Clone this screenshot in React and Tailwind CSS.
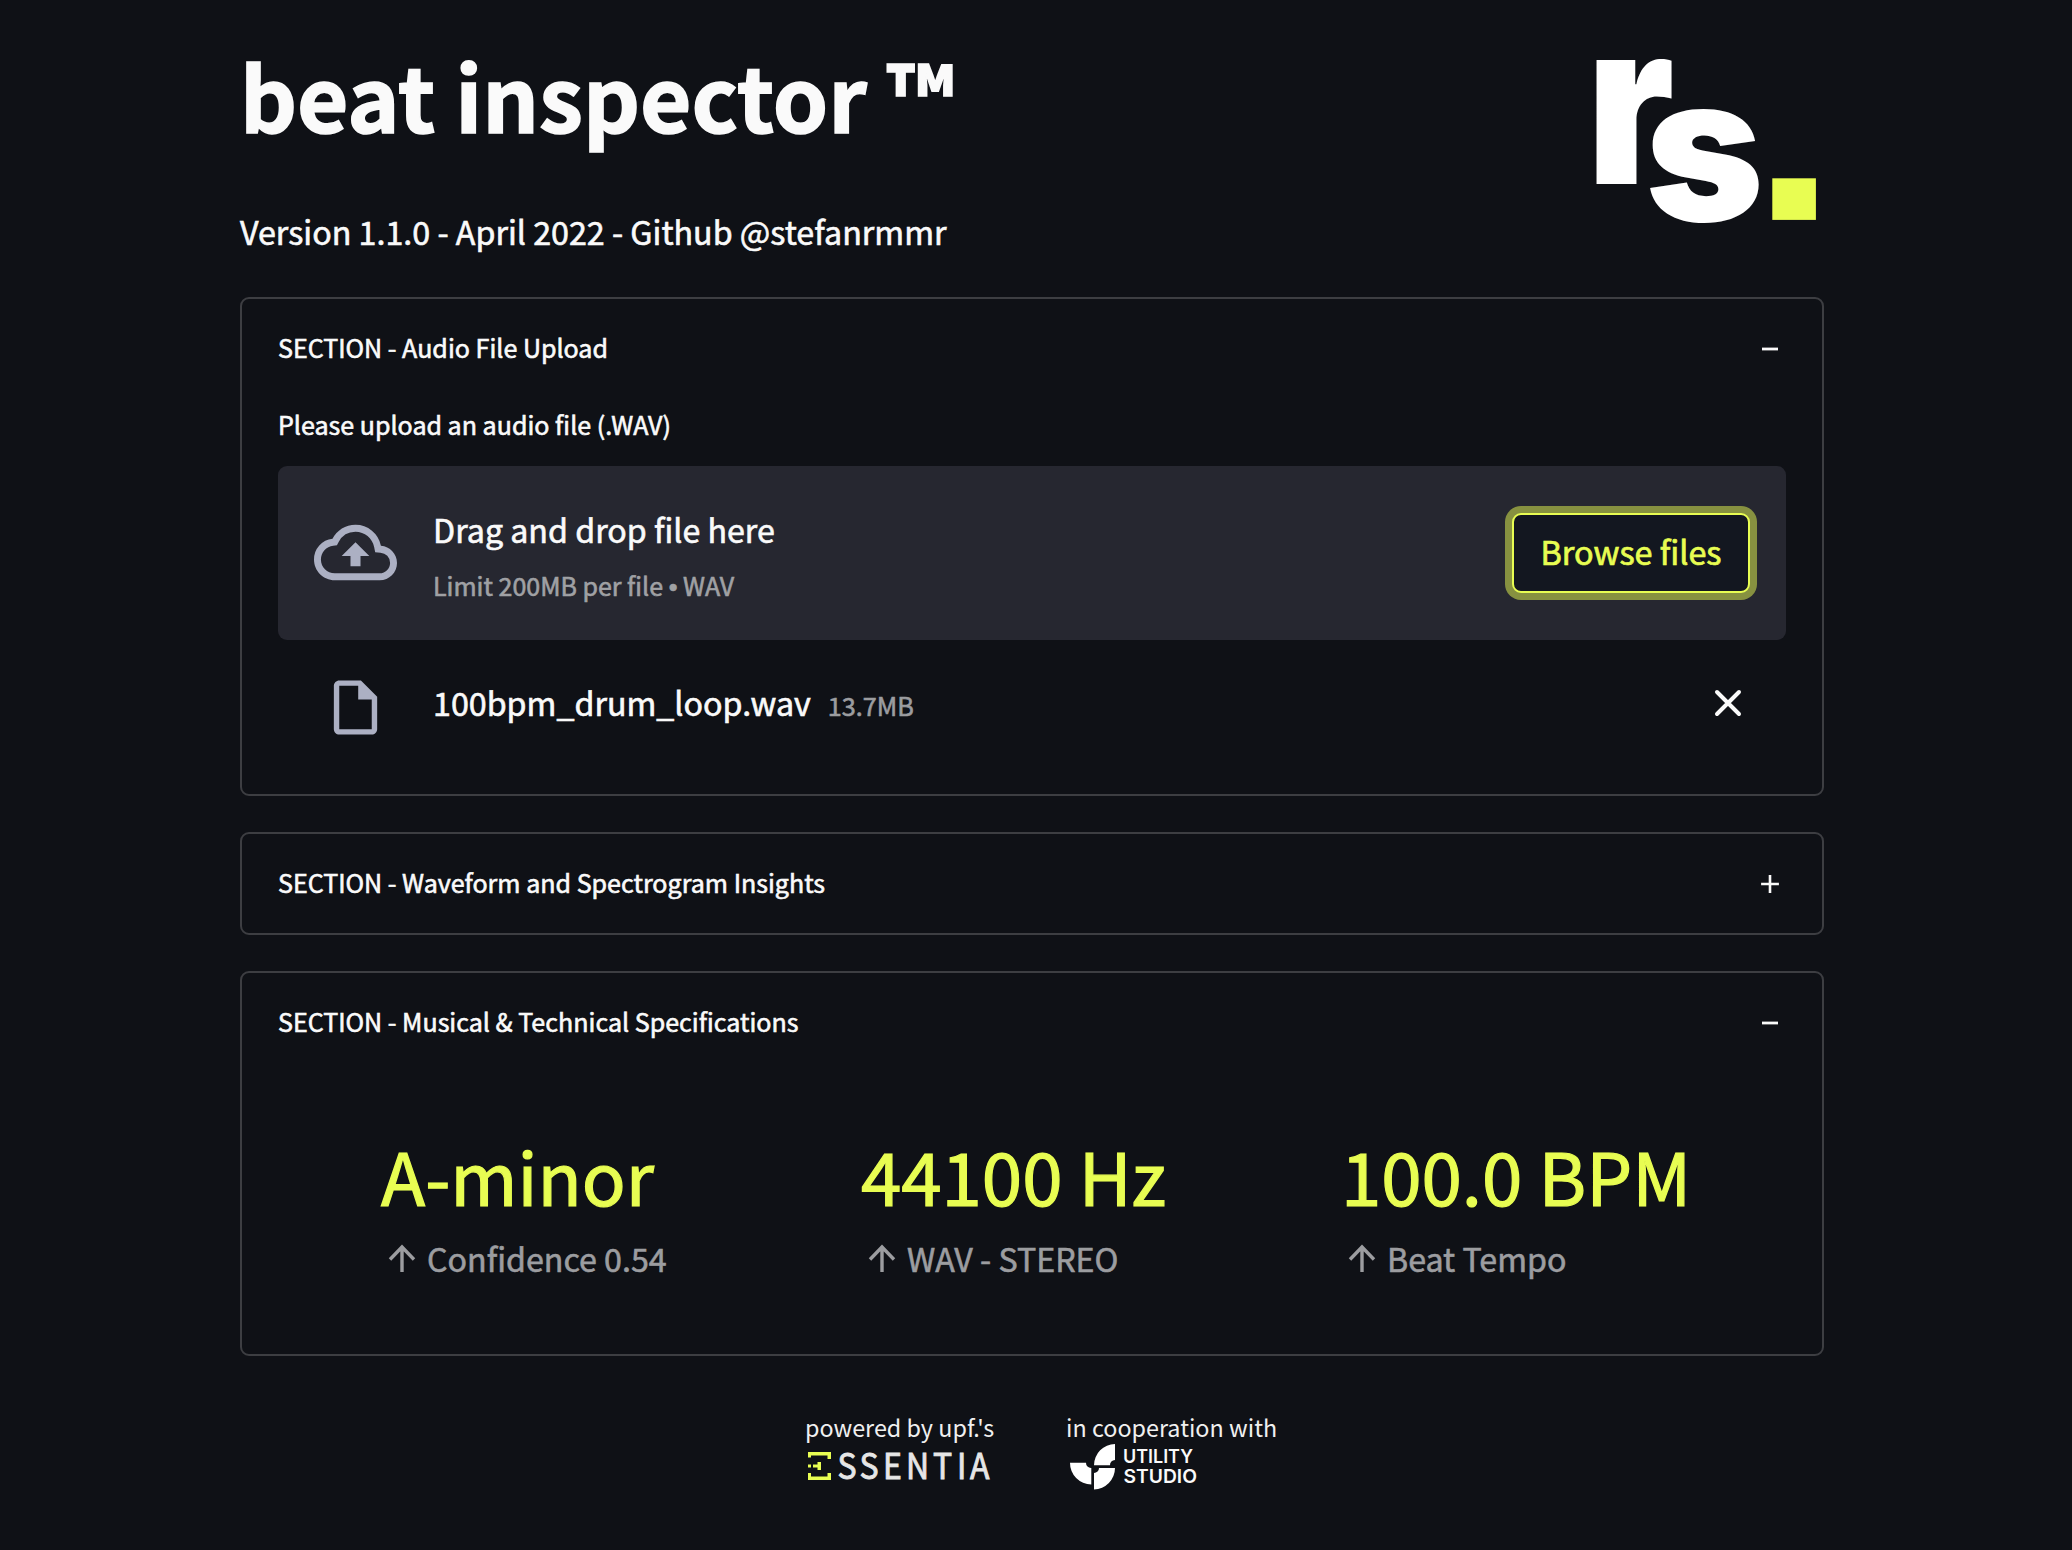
import React from "react";

function Minus() {
  return (
    <svg className="mt-[3px] h-5 w-5" viewBox="0 0 20 20" fill="none" stroke="#fafafa" strokeWidth="2.8" strokeLinecap="square">
      <path d="M3.4 10H16.6" />
    </svg>
  );
}

function Plus() {
  return (
    <svg className="mt-[3px] h-5 w-5" viewBox="0 0 20 20" fill="none" stroke="#fafafa" strokeWidth="2.6" strokeLinecap="square">
      <path d="M2.4 10H17.6M10 2.4V17.6" />
    </svg>
  );
}

function Section({ title, open, className, children }) {
  return (
    <section className={"w-[1584px] rounded-[9px] border-2 border-[#3d3e42] px-[36px] pt-[28px] " + className}>
      <header className="flex h-10 items-center justify-between pr-[6px]">
        <h2 className="text-[25.06px] leading-10">{title}</h2>
        {open ? <Minus /> : <Plus />}
      </header>
      {children}
    </section>
  );
}

function BrandMark() {
  return (
    <svg className="mt-[58px] mr-[7px] h-[168px] w-[220px] shrink-0 overflow-visible" viewBox="0 0 220 168">
      <g fontFamily="Inter" fontWeight="900" fill="#ffffff">
        <text transform="translate(-10.5 126) scale(1.03 1.15)" fontSize="197">r</text>
        <text transform="translate(48 162.5)" fontSize="202">s</text>
      </g>
      <rect x="175.3" y="120.3" width="43.6" height="41.6" fill="#e8fd52" />
    </svg>
  );
}

function EssentiaLogo() {
  return (
    <svg className="mt-[7px] ml-[3px] h-[28px] w-[190px] overflow-visible" viewBox="0 0 190 28">
      <path
        fill="#e8fd52"
        d="M0 0H23V7H19.500V3.500H3V5.500H0ZM0 28H23V21H19.500V24.500H3V21H0ZM0 12.500H3V15.500H0ZM5 12.500H9.500V10H13V18H9.500V15.500H5Z"
      />
      <text
        transform="scale(0.9 1)"
        fontFamily="Noto Sans CJK SC"
        fontSize="35.5"
        fill="#e6e6e6"
        stroke="#e6e6e6"
        strokeWidth="0.9"
        y="27"
        x="32.8 57.2 83.3 108.9 138.9 165.6 180"
      >
        SSENTIA
      </text>
    </svg>
  );
}

function UtilityLogo() {
  return (
    <svg className="-mt-px ml-1 h-[46px] w-[140px] overflow-visible" viewBox="0 0 140 46">
      <g fill="#ffffff">
        <path d="M45 0V16A5 5 0 0 0 40 21.300H24A21.300 21.300 0 0 1 45 0Z" />
        <path d="M0 18.800H16A5 5 0 0 0 21.300 24V40.500A21.500 21.500 0 0 1 0 18.800Z" />
        <path d="M45 24A21.500 21.500 0 0 1 24 45.500V29A5 5 0 0 0 29 24Z" />
      </g>
      <g fontFamily="Inter" fontWeight="600" fontSize="19" fill="#fafafa">
        <text x="53" y="19.300" textLength="70" lengthAdjust="spacingAndGlyphs">UTILITY</text>
        <text x="53.500" y="38.600" textLength="73.500" lengthAdjust="spacingAndGlyphs">STUDIO</text>
      </g>
    </svg>
  );
}

const metrics = [
  { value: "A-minor", delta: "Confidence 0.54" },
  { value: "44100 Hz", delta: "WAV - STEREO" },
  { value: "100.0 BPM", delta: "Beat Tempo" },
];

function Metric({ value, delta }) {
  return (
    <div>
      <div className="text-[72.6px] leading-[100px] whitespace-nowrap text-[#e8fd52] [-webkit-text-stroke:1.2px_#e8fd52]">{value}</div>
      <div className="mt-[8px] flex h-[50px] items-center gap-[10px] text-[32.2px] leading-[50px] whitespace-nowrap text-[#9c9da0]">
        <svg className="ml-[7px] h-[28px] w-[28px]" viewBox="0 0 28 28" fill="none" stroke="currentColor" strokeWidth="3.4">
          <path d="M14 29V3M2 15.500L14 3L26 15.500" />
        </svg>
        <span className="ml-px [-webkit-text-stroke:0.6px_#9c9da0]">{delta}</span>
      </div>
    </div>
  );
}

export default function App() {
  return (
    <div className="h-[1550px] w-[2072px] overflow-hidden bg-[#0f1116] font-['Noto_Sans_CJK_SC',sans-serif] text-[#fafafa]">
      <main className="ml-[240px] w-[1584px] [-webkit-text-stroke:0.6px]">
        <div className="flex h-[297px] justify-between">
          <div className="pt-[45px]">
            <h1 className="text-[88.6px] leading-[100px] font-bold whitespace-nowrap [-webkit-text-stroke:1.6px]">beat inspector ™</h1>
            <p className="mt-[61px] text-[32.240px] leading-[50px] whitespace-nowrap">
              Version 1.1.0 - April 2022 - Github @stefanrmmr
            </p>
          </div>
          <BrandMark />
        </div>

        <Section title="SECTION - Audio File Upload" open className="h-[499px]">
          <p className="mt-[37px] text-[25.06px] leading-10">Please upload an audio file (.WAV)</p>
          <div className="mt-[22px] flex h-[174px] items-center rounded-[9px] bg-[#262730] px-[36px]">
            <svg className="mb-[2px] h-[83px] w-[83px] shrink-0" viewBox="0 0 24 24" fill="#acb0c3">
              <path d="M19.35 10.04A7.49 7.49 0 0 0 12 4C9.11 4 6.6 5.64 5.35 8.04A5.994 5.994 0 0 0 0 14c0 3.31 2.69 6 6 6h13c2.76 0 5-2.24 5-5 0-2.64-2.05-4.78-4.65-4.96zM19 18H6c-2.21 0-4-1.79-4-4 0-2.05 1.53-3.76 3.56-3.970l1.070-.11.5-.95A5.469 5.469 0 0 1 12 6c2.620 0 4.880 1.860 5.390 4.430l.3 1.500 1.530.11A2.980 2.980 0 0 1 22 15c0 1.650-1.350 3-3 3zM8 13h2.550v3h2.900v-3H16l-4-4-4 4z" />
            </svg>
            <div className="mt-[4px] ml-[36px] flex-1">
              <p className="text-[32.2px] leading-[52px]">Drag and drop file here</p>
              <p className="mt-[10px] text-[25px] leading-10 text-[#a0a1a4]">
                Limit 200MB per file <span className="font-['Liberation_Sans']">•</span> WAV
              </p>
            </div>
            <button className="flex h-20 w-[238px] items-center justify-center rounded-[9px] border-2 border-[#e8fd52] bg-[#131720] text-[32.4px] text-[#e8fd52] shadow-[0_0_0_7px_#879140]">
              <span className="mb-[4px] leading-[52px] [-webkit-text-stroke:0.7px_#e8fd52]">Browse files</span>
            </button>
          </div>
          <div className="mt-[36px] flex h-[64px] items-center pr-[42px] pl-[45px]">
            <svg className="mb-px h-[65px] w-[65px] shrink-0" viewBox="0 0 24 24" fill="#acb0c3">
              <path d="M14 2H6c-1.100 0-1.990.9-1.990 2L4 20c0 1.100.890 2 1.990 2H18c1.100 0 2-.9 2-2V8l-6-6zM6 20V4h7v5h5v11H6z" />
            </svg>
            <div className="mb-[12px] ml-[45px] flex flex-1 items-baseline gap-[17px]">
              <span className="text-[32.24px] leading-[52px]">100bpm_drum_loop.wav</span>
              <span className="text-[25.2px] leading-10 text-[#9c9da0]">13.7MB</span>
            </div>
            <svg className="mb-[11px] h-[32px] w-[32px]" viewBox="0 0 32 32" fill="none" stroke="#fafafa" strokeWidth="4" strokeLinecap="round">
              <path d="M5 5L27 27M27 5L5 27" />
            </svg>
          </div>
        </Section>

        <Section title="SECTION - Waveform and Spectrogram Insights" className="mt-[36px] h-[103px]" />

        <Section title="SECTION - Musical & Technical Specifications" open className="mt-[36px] h-[385px]">
          <div className="mt-[84px] grid grid-cols-[480px_480px_1fr] pl-[103px]">
            {metrics.map((m) => (
              <Metric key={m.value} {...m} />
            ))}
          </div>
        </Section>

        <footer className="mt-[53px] ml-[565px] flex text-[23.35px] leading-9 text-[#f0f0f0] [-webkit-text-stroke:0px]">
          <div className="w-[261px]">
            <p>powered by upf.'s</p>
            <EssentiaLogo />
          </div>
          <div>
            <p className="whitespace-nowrap">in cooperation with</p>
            <UtilityLogo />
          </div>
        </footer>
      </main>
    </div>
  );
}
